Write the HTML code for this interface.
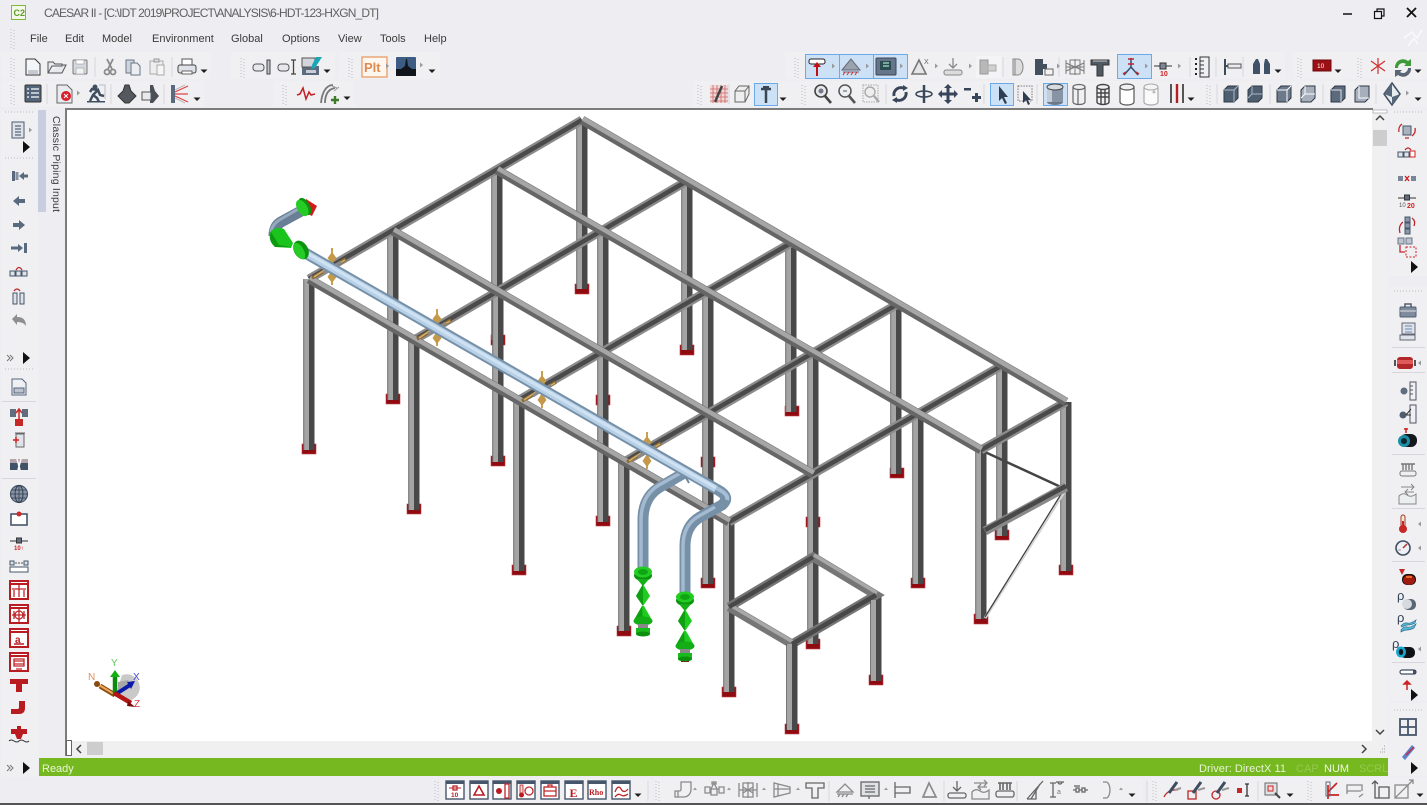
<!DOCTYPE html>
<html><head><meta charset="utf-8"><title>CAESAR II</title>
<style>
html,body{margin:0;padding:0;background:#eeeef2;overflow:hidden}
svg{display:block;position:absolute;left:0;top:0;filter:blur(.35px)}
text{font-family:"Liberation Sans",sans-serif}
.s{fill:none;stroke:#4a5a6e;stroke-width:1.5}
.g{fill:#5a6a7e}
.r{fill:#b81c20}
.gr{fill:#d6d9df;stroke:#777;stroke-width:1}
.lg{fill:#dfe3e8;stroke:#46566a;stroke-width:1}
.dk{fill:#46566a;stroke:#333b48;stroke-width:.8}
.rs{fill:none;stroke:#c0272b;stroke-width:1.3}
.rb{fill:#fff;stroke:#b81c20;stroke-width:2}
.hl{fill:#cce0f6;stroke:#6aa9ea;stroke-width:1}
.gp{stroke:#bdbdc2;stroke-width:1;stroke-dasharray:1 2;fill:none}
.sep{stroke:#d6d6dc;stroke-width:1}
.bx{fill:#fff;stroke:#46566a;stroke-width:1.4}
</style></head><body>
<svg width="1427" height="805" viewBox="0 0 1427 805" xmlns="http://www.w3.org/2000/svg">
<defs>
<path id="dn" d="M-3.5-1.5h7L0 2z" fill="#1e1e1e"/>
<path id="ua" d="M-2-1h4L0-3.5z" fill="#999"/>
<path id="sa" d="M-1 -2.500v5l3-2.500z" fill="#999"/>
<path id="la" d="M1-2.500v5l-3-2.500z" fill="#999"/>
<path id="ra" d="M-3-6v12l7-6z" fill="#111"/>
<g id="gv"><path class="gp" d="M0-9v19M3-8v19"/></g>
<g id="gh"><path class="gp" d="M-14 0h29" stroke-dasharray="1 1.400"/></g>
<g id="cols" fill="none">
<path d="M582 120V289M687 181V350M791 243V412M896 305V474M1002 366V536M1066 402V571M497 170V340M603 231V400M708 292V462M813 353V522M918 413V584M981 450V619M393 231V400M498 292V462M603 353V522M708 413V584M813 474V644M309 279V450M414 340V510M519 400V571M624 462V631M729 522V692M876 595V681M792 644V730"/>
</g>
<g id="rows" fill="none"><path d="M582 120L1066 402M497 170L981 450M393 231L813 474M309 279L729 522"/></g>
<g id="trans" fill="none"><path d="M582 120L309 279M687 181L414 340M791 243L519 400M896 305L624 462M1001 366L729 522M1066 402L981 450"/></g>
<g id="base"><rect x="-7" y="-7" width="14" height="10" fill="#8f0b10"/><rect x="-7" y="-7" width="14" height="10" fill="none" stroke="#c04048" stroke-width=".6"/></g>
<g id="sup">
<path d="M-20 11L-6 3M14-8L6-3" stroke="#8b6a35" stroke-width="3.500" fill="none"/>
<path d="M-18 10L-6 2M13-7L6-3" stroke="#d6b06a" stroke-width="1.400" fill="none"/>
<path d="M0-19v37" stroke="#c9a153" stroke-width="2"/>
<path d="M0-15L4.500-9 0-3-4.500-9zM0 3L4.500 10 0 16-4.500 10z" fill="#c49a4a"/>
<path d="M-9 6l9-6 9-5" stroke="#8a8a8a" stroke-width="3" fill="none"/>
</g>
<g id="flg"><ellipse cx="0" cy="2.500" rx="9" ry="5.500" fill="#0c930f"/><ellipse cx="0" cy="-1" rx="9" ry="5.500" fill="#22cc22"/><ellipse cx="0" cy="-1" rx="5" ry="3" fill="#0fa512"/></g>
<g id="stack">
<use href="#flg"/>
<path d="M-6 6L6 6 1 12-1 12z" fill="#14b017"/>
<path d="M0 11L7 23 0 33-7 23z" fill="#1ecb1e"/><path d="M0 11L-7 23 0 33z" fill="#0f9f12"/>
<path d="M-1 33L1 33 9 47-9 47z" fill="#1ecb1e"/><path d="M-1 33L-9 47 0 49z" fill="#0f9f12"/>
<ellipse cx="0" cy="48" rx="9.500" ry="4.500" fill="#13ad16"/>
<rect x="-5" y="51" width="10" height="4" fill="#888"/>
<path d="M-7 55h14v6h-14z" fill="#18bb1b"/><ellipse cx="0" cy="61" rx="7" ry="2.500" fill="#0b8f0e"/>
</g>
</defs>

<rect width="1427" height="805" fill="#eeeef2"/>

<!-- toolbar bands -->
<g fill="#f0f0f3">
<rect x="1" y="52" width="210" height="27"/><rect x="231" y="52" width="104" height="27"/><rect x="339" y="52" width="101" height="27"/>
<rect x="1" y="81" width="203" height="26"/><rect x="273" y="81" width="81" height="26"/>
<rect x="785" y="52" width="500" height="27"/><rect x="1293" y="52" width="134" height="27"/>
<rect x="693" y="81" width="734" height="26"/>
<rect x="1" y="111" width="37" height="44"/><rect x="1" y="156" width="37" height="208"/><rect x="1" y="365" width="37" height="412"/>
<rect x="1389" y="111" width="38" height="165"/><rect x="1389" y="287" width="38" height="414"/><rect x="1389" y="703" width="38" height="73"/>
<rect x="441" y="778" width="209" height="25"/><rect x="655" y="778" width="488" height="25"/><rect x="1148" y="778" width="279" height="25"/>
</g>

<!-- viewport -->
<rect x="67" y="110" width="1305" height="631" fill="#fff"/>
<rect x="67" y="108" width="1306" height="2" fill="#7c7c7c"/>
<rect x="65" y="108" width="2" height="648" fill="#7c7c7c"/>

<!-- tab -->
<rect x="38" y="110" width="8" height="102" fill="#c8cde0"/>
<text transform="translate(53,116) rotate(90)" font-size="10.500" fill="#3a3a3a" textLength="96" lengthAdjust="spacing">Classic Piping Input</text>

<!-- 3D scene -->
<g>
<g>
<use href="#base" x="582" y="291"/><use href="#base" x="687" y="352"/><use href="#base" x="792" y="413"/><use href="#base" x="897" y="475"/><use href="#base" x="1002" y="537"/><use href="#base" x="1066" y="572"/>
<use href="#base" x="498" y="342"/><use href="#base" x="603" y="402"/><use href="#base" x="708" y="464"/><use href="#base" x="813" y="524"/><use href="#base" x="918" y="585"/><use href="#base" x="981" y="621"/>
<use href="#base" x="393" y="401"/><use href="#base" x="498" y="463"/><use href="#base" x="603" y="523"/><use href="#base" x="708" y="585"/><use href="#base" x="813" y="646"/>
<use href="#base" x="309" y="451"/><use href="#base" x="414" y="511"/><use href="#base" x="519" y="572"/><use href="#base" x="624" y="633"/><use href="#base" x="729" y="694"/><use href="#base" x="876" y="682"/><use href="#base" x="792" y="731"/>
</g>
<!-- columns -->
<use href="#cols" stroke="#484848" stroke-width="11"/>
<use href="#cols" stroke="#a4a4a4" stroke-width="5" transform="translate(-2.500,0)"/>
<use href="#cols" stroke="#6c6c6c" stroke-width="1" transform="translate(-5.300,0)"/>
<!-- brace and diagonal -->
<path d="M985 452L1063 488" stroke="#444" stroke-width="2.500"/>
<path d="M985 618L1064 492" stroke="#d4d4d4" stroke-width="3"/>
<path d="M985 617L1063 491" stroke="#3e3e3e" stroke-width="1.200"/>
<!-- lower beams -->
<path d="M985 531L1066 487" stroke="#8a8a8a" stroke-width="9"/><path d="M985 530L1066 486" stroke="#484848" stroke-width="4.500"/>
<path d="M729 607L813 557L876 595 792 644 729 607" fill="none" stroke="#767676" stroke-width="9"/>
<path d="M813 557L876 595M729 607L792 644" stroke="#a8a8a8" stroke-width="3.500" transform="translate(1,-2)"/>
<path d="M729 607L813 557M792 644L876 595" stroke="#484848" stroke-width="4.500"/>
<path d="M792 644V730" stroke="#484848" stroke-width="11"/><path d="M789.500 644V730" stroke="#a4a4a4" stroke-width="5"/>
<path d="M876 600V681" stroke="#484848" stroke-width="11"/><path d="M873.500 600V681" stroke="#a4a4a4" stroke-width="5"/>
<!-- top beams -->
<use href="#trans" stroke="#8c8c8c" stroke-width="9"/>
<use href="#trans" stroke="#4a4a4a" stroke-width="4.500"/>
<use href="#rows" stroke="#666" stroke-width="9"/>
<use href="#rows" stroke="#a6a6a6" stroke-width="4.500" transform="translate(1,-1.500)"/>
<!-- supports -->
<use href="#sup" x="332" y="267"/><use href="#sup" x="437" y="328"/><use href="#sup" x="542" y="390"/><use href="#sup" x="647" y="451"/>
<!-- left pipe lower -->
<path d="M686 472L660 487Q643 497 643 520V572" fill="none" stroke="#7690a8" stroke-width="11"/>
<path d="M686 470L659 485Q641 496 641 520V572" fill="none" stroke="#a4bad0" stroke-width="3.500"/>
<path d="M681 469l8 14" stroke="#6f88a1" stroke-width="2"/>
<!-- main pipe -->
<path d="M300 250L718 490Q731 497 722 505L700 517Q685 526 685 546V596" fill="none" stroke="#7690a8" stroke-width="11"/>
<path d="M300 250L716 489" stroke="#b7d0e6" stroke-width="7"/>
<path d="M300 249L716 488" stroke="#cfe2f3" stroke-width="3"/>
<path d="M716 488Q729 494 727 500" fill="none" stroke="#a7bfd6" stroke-width="4"/>
<path d="M715 507L699 516Q683 525 683 546V596" fill="none" stroke="#a4bad0" stroke-width="3.500"/>
<!-- green stacks -->
<use href="#stack" x="643" y="573"/>
<rect x="681" y="659" width="8" height="3" fill="#8f0b10"/>
<use href="#stack" x="685" y="598"/>
<!-- left end -->
<path d="M303 210L281 222Q274 226 274 236" fill="none" stroke="#6a7f96" stroke-width="11"/>
<path d="M300 208L281 219Q272 224 271 232" fill="none" stroke="#96abc0" stroke-width="3"/>
<path d="M306 199L317 206 312 216 302 211z" fill="#d21c1c"/>
<g transform="translate(304,207) rotate(-30)"><ellipse cx="1" cy="0" rx="5" ry="9.500" fill="#0c930f"/><ellipse cx="-2" cy="0" rx="5" ry="9" fill="#26cc26"/></g>
<path d="M271 231Q277 226 284 229L293 243 291 248 275 247Q267 240 271 231z" fill="#1ac41c"/>
<path d="M271 232L279 245 290 247 275 247Q268 240 271 232z" fill="#0e9911"/>
<g transform="translate(301,250) rotate(60)"><ellipse cx="0" cy="0" rx="10" ry="7" fill="#0c930f"/><ellipse cx="0" cy="2" rx="9" ry="4.500" fill="#26cc26"/></g>
<!-- triad -->
<path d="M122 675A13 13 0 0 1 131 700L116 694z" fill="#c9c9c9"/><path d="M118 682L128 680 130 688 118 692z" fill="#a7a7a7"/>
<path d="M115 695L100 686" stroke="#8a4b10" stroke-width="5"/><path d="M114 694L99 685" stroke="#f0a85a" stroke-width="2"/><circle cx="97" cy="684" r="3" fill="#8a4b10"/>
<path d="M115 695V676" stroke="#0c8c0c" stroke-width="4.500"/><path d="M110 677L115 670 120 677z" fill="#12b012"/>
<path d="M116 694L130 685" stroke="#0a1aa8" stroke-width="4"/><path d="M127 682L135 681 131 689z" fill="#0a1aa8"/>
<path d="M114 693L131 703" stroke="#b31414" stroke-width="4.500"/><path d="M128 701L135 707 127 706z" fill="#7a0a0a"/>
<text x="111" y="666" font-size="10" fill="#5ec85e">Y</text>
<text x="133" y="680" font-size="10" fill="#4646d0">X</text>
<text x="134" y="707" font-size="10" fill="#d04040">Z</text>
<text x="88" y="680" font-size="10" fill="#e0905a">N</text>
</g>

<!-- scrollbars -->
<rect x="1372" y="110" width="16" height="647" fill="#f0f0f0"/>
<rect x="67" y="741" width="1321" height="16" fill="#f0f0f0"/>
<rect x="1373" y="130" width="14" height="16" fill="#cdcdcd"/>
<rect x="87" y="742" width="16" height="13" fill="#cdcdcd"/>
<path d="M1376 120l4-4 4 4M1376 730l4 4 4-4M81 745l-4 4 4 4M1362 745l4 4-4 4" fill="none" stroke="#444" stroke-width="1.500"/>
<rect x="66.500" y="740.500" width="5" height="15" fill="#fff" stroke="#666"/>
<path d="M1384 746h1M1382 749h3M1380 752h5" stroke="#bbb" stroke-width="1.400" stroke-dasharray="1 1"/>
<rect x="1373" y="110" width="14" height="3" fill="#fff" stroke="#999" stroke-width=".6"/>

<!-- status -->
<rect x="39" y="758" width="1349" height="18" fill="#76b81f"/>
<text x="42" y="772" font-size="11" fill="#eaf5d8">Ready</text>
<text x="1199" y="772" font-size="11" fill="#e8f3d4" textLength="87">Driver: DirectX 11</text>
<text x="1296" y="772" font-size="11" fill="#94c94f">CAP</text>
<text x="1324" y="772" font-size="11" fill="#eef7df">NUM</text>
<text x="1359" y="772" font-size="11" fill="#94c94f">SCRL</text>
<rect x="0" y="803" width="1427" height="2" fill="#555"/>

<!-- title bar -->
<rect x="11.500" y="5.500" width="14" height="14" fill="#f3f8ea" stroke="#7fb83a"/>
<text x="13.500" y="16" font-size="9" font-weight="bold" fill="#5f9a22">C2</text>
<text x="44" y="17" font-size="12" fill="#606060" textLength="335" lengthAdjust="spacing">CAESAR II - [C:\IDT 2019\PROJECT\ANALYSIS\6-HDT-123-HXGN_DT]</text>
<path d="M1343 14h9" stroke="#111" stroke-width="1.500"/>
<path d="M1374.500 11.500h7v7h-7zM1377 11.500v-2.500h7v7h-2.500" fill="none" stroke="#111" stroke-width="1.200"/>
<path d="M1407 8l9 9M1416 8l-9 9" stroke="#111" stroke-width="1.800"/>
<path d="M1404 38l8-6 5 6 5-8M1408 46l6-8 4 6" fill="none" stroke="#fafafa" stroke-width="1.500"/>

<!-- menu -->
<use href="#gv" x="11" y="38"/>
<g font-size="11" fill="#3a3a3a">
<text x="30" y="42">File</text><text x="65" y="42">Edit</text><text x="102" y="42">Model</text><text x="152" y="42">Environment</text><text x="231" y="42">Global</text><text x="282" y="42">Options</text><text x="338" y="42">View</text><text x="380" y="42">Tools</text><text x="424" y="42">Help</text>
</g>

<!-- TOOLBAR row 1 left -->
<use href="#gv" x="11" y="67"/><use href="#gv" x="241" y="67"/><use href="#gv" x="349" y="67"/>
<use href="#gv" x="11" y="94"/><use href="#gv" x="283" y="94"/>
<g transform="translate(33,67)"><path d="M-7-8h9l5 5v11h-14z" fill="#f4f5f8" stroke="#333"/><path d="M-5 3h10v4h-10z" fill="#c5c9d2"/></g>
<g transform="translate(56,67)"><path d="M-8 6v-11h5l2 2h7v2h-10l-4 7h14l4-8h-4" fill="#e6e9ee" stroke="#555"/></g>
<g transform="translate(80,67)"><rect x="-7" y="-7" width="14" height="14" rx="1" class="gr"/><rect x="-4" y="-7" width="8" height="4" fill="#fff" stroke="#999" stroke-width=".6"/><rect x="-4" y="1" width="8" height="6" fill="#f2f2f2" stroke="#999" stroke-width=".6"/></g>
<g transform="translate(110,67)" fill="none" stroke="#8a8a8a" stroke-width="1.800"><path d="M-3-8L2 2M3-8L-2 2"/><circle cx="-3" cy="5" r="2.500"/><circle cx="3" cy="5" r="2.500"/></g>
<g transform="translate(134,67)"><path d="M-8-7h8v13h-8z" fill="#cfd4dc" stroke="#6a7688"/><path d="M-3-4h6l3 3v9h-9z" fill="#eceef2" stroke="#6a7688"/></g>
<g transform="translate(158,67)"><path d="M-8-6h13v13h-13z" fill="#eee" stroke="#aaa"/><path d="M-4-8h5v3h-5z" fill="#ddd" stroke="#999"/><path d="M-1-2h7v10h-7z" fill="#f6f6f6" stroke="#aaa"/></g>
<g transform="translate(187,67)"><rect x="-5" y="-8" width="10" height="6" fill="#fff" stroke="#555"/><rect x="-9" y="-2" width="18" height="8" rx="2" fill="#dfe3e9" stroke="#444"/><rect x="-5" y="4" width="10" height="3" fill="#fff" stroke="#666"/></g>
<use href="#dn" x="204" y="71"/>
<path class="sep" d="M95 57v20M172 57v20"/>
<g transform="translate(262,67)"><rect x="-9" y="-3" width="11" height="7" rx="3" fill="#e6e8ec" stroke="#555"/><rect x="5" y="-7" width="3" height="14" fill="#bfc4cc" stroke="#444"/></g>
<g transform="translate(287,67)"><rect x="-9" y="-3" width="11" height="7" rx="3" fill="#e6e8ec" stroke="#555"/><path d="M4-7h5M4 7h5M6.500-7v14" stroke="#444" stroke-width="1.300" fill="none"/></g>
<g transform="translate(316,67)"><path d="M-14-1h17v9h-17z" fill="#5d6b7e"/><path d="M-14-9h13v9h-13z" fill="#d2d6dc" stroke="#555"/><path d="M0-10l6 0-7 11-4 1 1-4z" fill="#1aa6b5"/><path d="M-10 3h10v3h-10z" fill="#c9cdd4"/></g>
<use href="#dn" x="327" y="71"/>
<g transform="translate(375,67)"><rect x="-13" y="-10" width="25" height="20" fill="#fdf7f0" stroke="#e8955c" stroke-width="1.200"/><text x="-11" y="5" font-size="13" font-weight="bold" fill="#df8a50">Plt</text></g>
<use href="#sa" x="387" y="66"/>
<g transform="translate(406,67)"><rect x="-10" y="-10" width="20" height="19" rx="1" fill="#3c5c84"/><path d="M-10 9V2h5l4-3 1-7h1l1 7 4 3h4v7z" fill="#10151c"/></g>
<use href="#sa" x="421" y="65"/><use href="#dn" x="432" y="71"/>

<!-- row 2 left -->
<g transform="translate(33,94)"><rect x="-8" y="-9" width="16" height="17" rx="1" fill="#54647a" stroke="#333"/><path d="M-6-5h2M-2-5h8M-6-1h2M-2-1h8M-6 3h2M-2 3h8" stroke="#dfe3ea" stroke-width="1.600"/></g>
<path class="sep" d="M47 84v20M111 84v20M164 84v20"/>
<g transform="translate(65,94)"><path d="M-8-9h10l5 5v13h-15z" fill="#e8eaee" stroke="#666"/><circle cx="1" cy="2" r="5" fill="#d61d2a"/><path d="M-1 0l4 4M3 0l-4 4" stroke="#fff"/></g>
<use href="#sa" x="78" y="93"/>
<g transform="translate(96,94)"><rect x="-9" y="7" width="18" height="1.500" fill="#3f4f60"/><circle cx="-1" cy="-7" r="2.500" fill="#3f4f60"/><path d="M-6 7l3-6 5-5 2 5 4 1M-3 1l4 3 2 4M2-4l-6-1-2 3" stroke="#3f4f60" stroke-width="2.500" fill="none"/><path d="M3-9h6v14" fill="none" stroke="#b8bcc4"/></g>
<g transform="translate(127,94)"><path d="M-2-9h4l2 6 5 5-7 7h-4l-7-7 5-5z" fill="#55595f" stroke="#333"/></g>
<g transform="translate(150,94)"><path d="M0-9h3l2 6 4 5-6 7h-3z" fill="#4b4f57"/><rect x="-8" y="-2" width="9" height="8" fill="#e8eaee" stroke="#555"/></g>
<g transform="translate(180,94)"><rect x="-9" y="-9" width="4" height="18" fill="#5a6a7e"/><path d="M-5-2L8-8M-5 0h13M-5 2L8 8" stroke="#d44" stroke-width="1.200" fill="none"/><path d="M-5-4L5-9M-5 4L5 9" stroke="#bbb" fill="none"/></g>
<use href="#dn" x="197" y="99"/>
<path d="M297 96l3-1 3-6 3 11 3-7 2 3 4-1" fill="none" stroke="#c62024" stroke-width="1.500" transform="translate(0,-1)"/>
<g transform="translate(330,94)"><path d="M-9 9C-8-3-3-9 3-9M-5 9C-5-1-1-5 5-6" fill="none" stroke="#777" stroke-width="1.800"/><path d="M1 6h8M5 2v8" stroke="#3d7a2a" stroke-width="2.400"/><path d="M2-8l5 2M4-3l5-4" stroke="#999"/></g>
<use href="#dn" x="347" y="98"/>

<!-- row 1 right -->
<use href="#gv" x="795" y="67"/><use href="#gv" x="1298" y="67"/><use href="#gv" x="1358" y="67"/>
<rect x="805.500" y="54.500" width="34" height="24" class="hl"/><rect x="839.500" y="54.500" width="34" height="24" class="hl"/><rect x="873.500" y="54.500" width="34" height="24" class="hl"/><rect x="1117.500" y="54.500" width="34" height="24" class="hl"/>
<g transform="translate(817,67)"><rect x="-8" y="-8" width="16" height="5" rx="2" fill="#fff" stroke="#222"/><path d="M0 9V-1" stroke="#c01014" stroke-width="2"/><path d="M-4 0L0-5 4 0z" fill="#c01014"/></g>
<use href="#sa" x="833" y="66"/>
<g transform="translate(851,66)"><path d="M-9 4L0-7 9 4z" fill="#9aa3ae" stroke="#667"/><path d="M-8 6h16" stroke="#667"/><path d="M-8 9l2-3M-4 9l2-3M0 9l2-3M4 9l2-3" stroke="#c33"/></g>
<use href="#sa" x="867" y="66"/>
<g transform="translate(886,67)"><rect x="-10" y="-9" width="20" height="17" rx="1" fill="#66758a" stroke="#3d4856"/><rect x="-6" y="-6" width="11" height="9" fill="#2a4b50"/><path d="M-3-4h6M-3-1h6" stroke="#cfe"/></g>
<use href="#sa" x="901" y="66"/>
<g transform="translate(920,67)"><path d="M-8 7L-1-7 6 7z" fill="#e6e6e6" stroke="#777" stroke-width="1.600"/><text x="4" y="-3" font-size="7" fill="#666">X</text></g>
<use href="#sa" x="936" y="66"/>
<g transform="translate(953,67)"><path d="M0-9v10M-4-3l4 4 4-4" fill="none" stroke="#888" stroke-width="1.300"/><rect x="-9" y="3" width="18" height="5" rx="2" fill="#dcdcdc" stroke="#888"/></g>
<use href="#sa" x="970" y="66"/>
<rect x="976" y="56" width="25" height="22" fill="#f4f4f6"/>
<g transform="translate(988,67)"><rect x="-8" y="-7" width="8" height="14" fill="#b8b8b8" stroke="#999"/><rect x="0" y="-2" width="8" height="6" fill="#d0d0d0" stroke="#aaa"/></g>
<path class="sep" d="M1003 57v20M1059 57v20M1190 57v20M1216 57v20M1243 57v20"/>
<g transform="translate(1017,67)"><path d="M-4-8h5a5 8 0 0 1 0 16h-5z" fill="#ddd" stroke="#888"/><path d="M-2-8v16" stroke="#888"/></g>
<g transform="translate(1044,67)"><rect x="-9" y="-8" width="8" height="16" fill="#45505e"/><rect x="-1" y="-3" width="4" height="5" fill="#45505e"/><rect x="1" y="2" width="8" height="6" fill="#f3f3f3" stroke="#666"/></g>
<use href="#sa" x="1058" y="66"/>
<g transform="translate(1075,67)" fill="none" stroke="#7a7a7a"><path d="M-9-7v14M9-7v14M-9 0h18M-5-7h10v14h-10zM0-8v16M-9-4l18 8M-9 4l18-8"/></g>
<g transform="translate(1100,67)"><path d="M-9-7h18v5h-6v11h-6v-11h-6z" fill="#4f5963" stroke="#333"/><path d="M-7-6h14" stroke="#c9ced5"/></g>
<g transform="translate(1131,67)"><path d="M0-9v9M-7 8L0 0l7 8" stroke="#37506e" stroke-width="1.500" fill="none"/><path d="M-3-8h6M-3-3h6M-8 7l3-2M5 5l3 2" stroke="#c0272b" stroke-width="1.500"/></g>
<use href="#sa" x="1146" y="66"/>
<g transform="translate(1163,67)"><path d="M-9-1h18" stroke="#333"/><rect x="-3" y="-4" width="6" height="6" fill="#7c8898" stroke="#333"/><text x="-3" y="9" font-size="7" font-weight="bold" fill="#c22">10</text></g>
<use href="#sa" x="1179" y="66"/>
<g transform="translate(1203,67)"><rect x="-3" y="-10" width="9" height="20" fill="#eef0f3" stroke="#333"/><path d="M-7-9v18" stroke="#222" stroke-width="2" stroke-dasharray="2 3"/><path d="M-3-6h4M-3-2h4M-3 2h4M-3 6h4" stroke="#333"/></g>
<g transform="translate(1233,67)"><path d="M-8-8v16M-8-1h16" stroke="#3d4a5a" stroke-width="2" fill="none"/><rect x="-5" y="-3" width="13" height="4" fill="#e9ebef" stroke="#555"/></g>
<g transform="translate(1262,67)"><path d="M-9 7V-3l3-5h2l2 5v10zM2 7V-3l1-5h2l3 5v10z" fill="#3f5268"/></g>
<use href="#dn" x="1278" y="71"/>
<g transform="translate(1322,66)"><rect x="-9" y="-6" width="18" height="11" fill="#9c0f14" stroke="#6d0a0e"/><text x="-5" y="2" font-size="6.500" fill="#fff">10</text></g>
<use href="#dn" x="1338" y="71"/>
<g transform="translate(1378,66)" stroke="#d32c2c" stroke-width="1.200"><path d="M0-8V8M-7-5L7 5M-7 5L7-5"/></g>
<g transform="translate(1403,67)"><path d="M-8 1a8 8 0 0 1 13-7l3-2v7h-7l2-2a5 5 0 0 0-8 4z" fill="#3f9a3a"/><path d="M8 1a8 8 0 0 1-13 7l-3 2V3h7l-2 2a5 5 0 0 0 8-4z" fill="#5a6674"/></g>
<use href="#dn" x="1418" y="71"/>

<!-- row 2 right -->
<use href="#gv" x="698" y="94"/><use href="#gv" x="802" y="94"/><use href="#gv" x="1207" y="94"/>
<path class="sep" d="M886 84v20M984 84v20M1037 84v20M1217 84v20M1270 84v20M1323 84v20M1376 84v20M729 84v20"/>
<rect x="754.500" y="83.500" width="23" height="22" class="hl"/><rect x="990.500" y="83.500" width="23" height="22" class="hl"/><rect x="1043.500" y="83.500" width="24" height="22" class="hl"/>
<g transform="translate(719,94)"><rect x="-9" y="-9" width="18" height="18" fill="#f1d8d8"/><path d="M-9-5h18M-9-1h18M-9 3h18M-9 7h18M-6-9v18M-2-9v18M2-9v18M6-9v18" stroke="#cf6666" stroke-width=".8"/><path d="M-4 8L3-8" stroke="#444" stroke-width="2.500"/></g>
<g transform="translate(742,94)"><path d="M-7 8V-3l4-5H7v8L3 8z M-7-3H3V8M3-3l4-5" fill="#eee" stroke="#666"/></g>
<g transform="translate(766,94)"><path d="M-5-5h10M0-7V9" stroke="#3a4654" stroke-width="2.500"/><path d="M-3-8h6v3h-6z" fill="#3a4654"/></g>
<use href="#dn" x="783" y="99"/>
<g transform="translate(823,94)"><circle cx="-2" cy="-3" r="6" fill="#e6e8ec" stroke="#444" stroke-width="1.600"/><path d="M2 2L8 9" stroke="#444" stroke-width="2.600"/><circle cx="-2" cy="-3" r="2.500" fill="#778"/></g>
<g transform="translate(847,94)"><circle cx="-2" cy="-3" r="6" fill="#edf0f3" stroke="#555" stroke-width="1.500"/><path d="M2 2L8 9" stroke="#555" stroke-width="2.600"/><path d="M-4-3h4" stroke="#555"/></g>
<g transform="translate(871,94)"><rect x="-8" y="-9" width="15" height="17" fill="none" stroke="#aaa" stroke-dasharray="1.500 1"/><circle cx="-1" cy="-2" r="5" fill="#eee" stroke="#aaa" stroke-width="1.400"/><path d="M3 2l5 6" stroke="#aaa" stroke-width="2.400"/></g>
<g transform="translate(900,94)"><path d="M-6 2A7 7 0 0 1 5-5M6-2A7 7 0 0 1-5 5" fill="none" stroke="#39465a" stroke-width="3"/><path d="M3-9l5 3-5 3zM-3 9l-5-3 5-3z" fill="#39465a"/></g>
<g transform="translate(924,94)"><path d="M0-9V9" stroke="#39465a" stroke-width="2.500"/><ellipse cx="0" cy="0" rx="8" ry="3" fill="none" stroke="#39465a" stroke-width="1.500"/></g>
<g transform="translate(948,94)" fill="#39465a"><path d="M-1.500-6h3v12h-3zM-6-1.500h12v3h-12z"/><path d="M0-10l4 4h-8zM0 10l4-4h-8zM-10 0l4-4v8zM10 0l-4-4v8z"/></g>
<g transform="translate(972,94)" fill="#39465a"><rect x="-8" y="-6" width="7" height="2.500"/><rect x="0" y="2" width="9" height="3"/><rect x="3" y="-1" width="3" height="9"/></g>
<g transform="translate(1002,94)"><path d="M-3-8V7l3-3 3 6 2-1-3-6h4z" fill="#2f3d4f"/></g>
<g transform="translate(1025,94)"><rect x="-7" y="-8" width="14" height="15" fill="none" stroke="#777" stroke-dasharray="1.500 1.200"/><path d="M-2-3V9l3-3 2 5 2-1-2-4h3z" fill="#2f3d4f"/></g>
<g transform="translate(1055,94)"><rect x="-8" y="-7" width="16" height="15" fill="#8694a5"/><rect x="-8" y="-7" width="5" height="15" fill="#c5ccd5"/><ellipse cx="0" cy="-7" rx="8" ry="3" fill="#d7dce2" stroke="#444"/><path d="M-8 8a8 3 0 0 0 16 0" fill="#6a7888"/></g>
<g transform="translate(1079,94)" fill="none" stroke="#666" stroke-width="1.200"><ellipse cx="0" cy="-7" rx="6" ry="2.500"/><path d="M-6-7V8M6-7V8M-1-5V10M-6 8a6 2.500 0 0 0 12 0"/></g>
<g transform="translate(1103,94)" fill="none" stroke="#444" stroke-width="1.400"><ellipse cx="0" cy="-7" rx="6" ry="2.500"/><path d="M-6-7V8M6-7V8M-2-5V10M2-5V10M-6 8a6 2.500 0 0 0 12 0M-6-1h12M-6 3h12"/></g>
<g transform="translate(1127,94)"><path d="M-7-7V8a7 3 0 0 0 14 0V-7" fill="#fff" stroke="#555" stroke-width="1.200"/><ellipse cx="0" cy="-7" rx="7" ry="3" fill="#eef0f2" stroke="#555" stroke-width="1.200"/></g>
<g transform="translate(1151,94)"><path d="M-7-7V8a7 3 0 0 0 14 0V-7" fill="#fafafa" stroke="#aaa" stroke-width="1.200"/><ellipse cx="0" cy="-7" rx="7" ry="3" fill="#f4f4f4" stroke="#aaa"/><circle cx="3" cy="-2" r="1.500" fill="#bbb"/></g>
<g transform="translate(1177,94)"><path d="M-6-10V9M6-10V9" stroke="#555" stroke-width="2"/><path d="M0-10V9" stroke="#b51f22" stroke-width="2.400"/></g>
<use href="#dn" x="1191" y="99"/>
<g transform="translate(1231,94)"><path d="M-7-4l4-4h10v12l-4 4H-7z" fill="#4f5f72" stroke="#2e3946"/><path d="M-7-4H3v12M3-4l4-4" fill="none" stroke="#aeb7c2"/></g>
<g transform="translate(1255,94)"><path d="M-7-4l4-4h10v12l-4 4H-7z" fill="#4f5f72" stroke="#2e3946"/><path d="M-3-8v8H7M-3 0l-4 4" fill="none" stroke="#aeb7c2"/></g>
<g transform="translate(1284,94)"><path d="M-7-4l4-4h10v12l-4 4H-7z" fill="#6c7a8b" stroke="#2e3946"/><path d="M-7-4h10v12M3-4l4-4" fill="none" stroke="#fff"/></g>
<g transform="translate(1308,94)"><path d="M-7-4l4-4h10v12l-4 4H-7z" fill="#a6afbb" stroke="#2e3946"/><path d="M-3-8v8H7M-3 0l-4 4" fill="none" stroke="#fff"/></g>
<g transform="translate(1338,94)"><path d="M-7-4l4-4h10v12l-4 4H-7z" fill="#5b6a7c" stroke="#2e3946"/><path d="M-7-4h10v12" fill="none" stroke="#dfe3e8"/></g>
<g transform="translate(1362,94)"><path d="M-7-4l4-4h10v12l-4 4H-7z" fill="#a6afbb" stroke="#2e3946"/><path d="M-3-8v12h10" fill="none" stroke="#fff"/></g>
<g transform="translate(1392,94)"><path d="M0-11L8 0 0 11-8 0z" fill="#e9ecef" stroke="#3e4d60" stroke-width="1.500"/><path d="M0-11L-8 0l8 3zM0 11L8 0l-8 3z" fill="#56677c"/></g>
<use href="#sa" x="1407" y="93"/><use href="#dn" x="1418" y="99"/>

<!-- LEFT TOOLBAR -->
<use href="#gh" x="19" y="112"/><use href="#gh" x="19" y="158"/><use href="#gh" x="19" y="369"/>
<g transform="translate(18,130)"><rect x="-6" y="-8" width="12" height="16" fill="#dfe3e9" stroke="#4a5a6e"/><path d="M-3-4h6M-3-1h6M-3 2h6M-3 5h6" stroke="#36465a"/></g><use href="#sa" x="30" y="130"/>
<use href="#ra" x="26" y="147"/><use href="#ra" x="26" y="358"/><use href="#ra" x="26" y="768"/><use href="#ra" x="1414" y="267"/><use href="#ra" x="1414" y="695"/><use href="#ra" x="1414" y="768"/>
<path d="M7 355l3 3-3 3M10 355l3 3-3 3M7 765l3 3-3 3M10 765l3 3-3 3" fill="none" stroke="#777"/>
<g class="g">
<g transform="translate(19,176)"><rect x="-7" y="-5" width="3" height="10"/><rect x="-3.500" y="-4" width="3" height="8" fill="#8390a1"/><path d="M0 0l5-4v2.500h4v3h-4V4z"/></g>
<path transform="translate(19,201)" d="M-6 0l6-5v3h6v4H0v3z"/>
<path transform="translate(19,225)" d="M6 0L0-5v3h-6v4h6v3z"/>
<g transform="translate(19,248)"><rect x="5" y="-5" width="3" height="10"/><path d="M4 0L-1-4v2.500h-7v3h7V4z"/></g>
</g>
<g transform="translate(19,271)"><rect x="-9" y="0" width="5" height="5" class="lg"/><rect x="-3" y="0" width="5" height="5" class="lg"/><rect x="3" y="0" width="5" height="5" class="lg"/><path d="M-3-1q3-5 6 0" class="rs"/></g>
<g transform="translate(19,296)"><rect x="-6" y="-3" width="4" height="11" class="lg"/><rect x="1" y="-3" width="4" height="11" class="lg"/><path d="M-5-5q3-4 6 0" class="rs"/></g>
<path transform="translate(19,320)" d="M-7-1l5-5v3c5 0 9 2 9 9-2-3-5-4-9-4v3z" fill="#8e8e8e"/>
<g transform="translate(19,387)"><path d="M-7-8h10l4 4v12h-14z" fill="#eef0f3" stroke="#54647a"/><rect x="-5" y="1" width="10" height="5" fill="#bcc3cc" stroke="#54647a"/></g>
<path class="sep" d="M2 401.500h34M2 478.500h34M1392 347.500h33M1392 372.500h33M1392 454.500h33M1392 508.500h33M1392 561.500h33M1392 662.500h33"/>
<g transform="translate(19,416)"><rect x="-9" y="-7" width="6" height="8" fill="#5f6d7e"/><rect x="3" y="-7" width="6" height="8" fill="#5f6d7e"/><rect x="-4" y="3" width="8" height="7" fill="#c62828"/><path d="M0-6V3M-3-3l3-4 3 4" stroke="#c62828" fill="none" stroke-width="1.500"/></g>
<g transform="translate(19,440)"><path d="M-3-6h8v13h-8z" fill="#dfe2e7" stroke="#666"/><path d="M-4-7h10" stroke="#666"/><path d="M-6 0h6M-3-3v6" stroke="#c22" stroke-width="1.500"/></g>
<g transform="translate(19,465)"><rect x="-9" y="-2" width="18" height="7" fill="#3f5268"/><rect x="-9" y="-6" width="18" height="4" fill="#b6a4ac"/><path d="M-2-6L1 5M2-6L-1 5" stroke="#fff" stroke-width="1.500"/></g>
<g transform="translate(19,494)"><circle r="8.500" fill="#8a96a8" stroke="#46566a" stroke-width="1.200"/><ellipse rx="4" ry="8.500" fill="none" stroke="#2f3d4f"/><path d="M-8.500 0h17M-7-4h14M-7 4h14M0-8.500v17" stroke="#2f3d4f" stroke-width=".8"/></g>
<g transform="translate(19,519)"><rect x="-8" y="-5" width="16" height="11" fill="#fff" stroke="#46566a" stroke-width="1.600"/><circle cy="-5" r="2.500" fill="#cf2a2a"/></g>
<g transform="translate(19,543)"><path d="M-9-2H9" stroke="#333"/><rect x="-2.500" y="-5" width="5" height="5" fill="#5f6d7e" stroke="#333"/><text x="-5" y="7" font-size="6" font-weight="bold" fill="#c22">10↑</text></g>
<g transform="translate(19,566)"><rect x="-9" y="-5" width="4" height="4" class="lg"/><rect x="5" y="-5" width="4" height="4" class="lg"/><path d="M-4-3h8" stroke="#555" stroke-dasharray="2 1"/><rect x="-9" y="1" width="18" height="5" fill="#fff" stroke="#46566a"/></g>
<g class="rb">
<g transform="translate(19,590)"><rect x="-9" y="-9" width="18" height="18"/><path d="M-9-6h18" stroke-width="2"/><path d="M-5 7V0M5 7V0M-7-1h14M0-5v12" class="rs"/></g>
<g transform="translate(19,614)"><rect x="-9" y="-9" width="18" height="18"/><path d="M-9-6h18" stroke-width="2"/><path d="M-7 1h14M0-5V8M-5-3v8M5-3v8" class="rs"/><circle cy="1" r="4" class="rs"/></g>
<g transform="translate(19,638)"><rect x="-9" y="-9" width="18" height="18"/><path d="M-9-6h18" stroke-width="2"/><path d="M-5 6h10" stroke-width="1.500"/></g>
<g transform="translate(19,662)"><rect x="-9" y="-9" width="18" height="18"/><path d="M-9-6h18" stroke-width="2"/><path d="M-5-3h10v7h-10zM-5-1h10M-5 2h10M-3 7h6" class="rs"/></g>
</g>
<text x="15" y="643" font-size="10" font-weight="bold" fill="#b81c20">a</text>
<path class="r" transform="translate(19,685)" d="M-9-6H9v5H3v8h-6v-8h-6z"/>
<path class="r" transform="translate(18,708)" d="M1-7h6v7c0 4-2 6-6 6H-7V1h6c2 0 2-1 2-2z"/>
<g transform="translate(19,733)"><path class="r" d="M-8-4h16v5H4l-2 5h-4l-2-5H-8zM-2-7h4v3h-4z"/><path d="M-10 8q2-2 5 0t5 0 5 0 5 0" fill="none" stroke="#333"/></g>

<!-- RIGHT TOOLBAR -->
<use href="#gh" x="1408" y="112"/><use href="#gh" x="1408" y="291"/><use href="#gh" x="1408" y="710"/>
<g transform="translate(1407,130)"><rect x="-4" y="-4" width="8" height="9" fill="#aab3bf" stroke="#46566a"/><path d="M-8 2a8 8 0 0 1 3-8M8-2a8 8 0 0 1-3 8M-2 8h4" class="rs"/></g>
<g transform="translate(1407,153)"><rect x="-9" y="-1" width="5" height="5" fill="#dfe3e8" stroke="#46566a"/><rect x="-3" y="-1" width="5" height="5" fill="#dfe3e8" stroke="#46566a"/><rect x="3" y="-2" width="5" height="6" fill="#fff" stroke="#c22"/><path d="M-2-3q3-4 6 0" class="rs"/></g>
<g transform="translate(1407,178)"><rect x="-9" y="-2" width="5" height="5" fill="#78869a"/><rect x="4" y="-2" width="5" height="5" fill="#78869a"/><path d="M-2-2L2 3M2-2L-2 3" stroke="#c22" stroke-width="1.400"/></g>
<g transform="translate(1407,201)"><path d="M-9-3H9" stroke="#333"/><rect x="-2.500" y="-6" width="5" height="5" fill="#5f6d7e" stroke="#333"/><text x="-8" y="6" font-size="6" fill="#555">10</text><text x="0" y="7" font-size="7" font-weight="bold" fill="#c22">20</text></g>
<g transform="translate(1407,226)"><rect x="-2" y="-9" width="5" height="5" fill="#8c98a8" stroke="#46566a"/><rect x="-2" y="-3" width="5" height="5" fill="#8c98a8" stroke="#46566a"/><rect x="-2" y="3" width="5" height="5" fill="#8c98a8" stroke="#46566a"/><path d="M-4-4q-5 4-3 11M5-8q4 3 2 8" class="rs" stroke-width="1.700"/></g>
<g transform="translate(1407,248)"><rect x="-9" y="-10" width="6" height="6" fill="#bfc5cd" stroke="#6a7688"/><rect x="-1" y="-10" width="6" height="6" fill="#bfc5cd" stroke="#6a7688"/><rect x="-1" y="-1" width="10" height="10" fill="none" stroke="#c22" stroke-dasharray="2 1.500"/><path d="M-7-3v7h5" class="rs"/></g>
<g transform="translate(1408,310)"><rect x="-8" y="-3" width="16" height="10" rx="1" fill="#7f8c9d" stroke="#4f5d70"/><path d="M-3-3v-3h6v3" fill="none" stroke="#4f5d70" stroke-width="1.500"/><path d="M-8 1h16" stroke="#dfe3e8"/></g>
<g transform="translate(1408,332)"><rect x="-6" y="-9" width="13" height="11" fill="#dfe3e9" stroke="#667"/><path d="M-3-6h7M-3-3h7M-3 0h7" stroke="#6a88b5"/><rect x="-8" y="3" width="15" height="5" fill="#dfe3e9" stroke="#667"/></g>
<g transform="translate(1405,363)"><rect x="-8" y="-6" width="16" height="12" rx="3" fill="#b3262a"/><rect x="-8" y="-3" width="16" height="4" fill="#e05a5c"/><path d="M-10-3v6M10-3v6" stroke="#555" stroke-width="2"/></g><use href="#la" x="1420" y="363"/>
<g transform="translate(1408,391)"><rect x="2" y="-9" width="6" height="18" fill="#eef0f3" stroke="#556"/><circle cx="-4" cy="0" r="3.500" fill="#5f6d7e"/><path d="M2-5h3M2-1h3M2 3h3" stroke="#556"/></g>
<g transform="translate(1408,414)"><rect x="2" y="-9" width="6" height="18" fill="#eef0f3" stroke="#556"/><circle cx="-5" cy="1" r="3.500" fill="#4f5d70"/><path d="M-2 1l5-6M-2 1h5" stroke="#333"/></g>
<g transform="translate(1408,440)"><rect x="-8" y="-6" width="17" height="13" rx="6" fill="#14181d"/><circle cx="-4" cy="1" r="6" fill="#1c8ea6"/><circle cx="-4" cy="1" r="3" fill="#0c2730"/><path d="M-2-7V-12M-4-11h4" stroke="#c22" stroke-width="1.500"/></g>
<g transform="translate(1408,470)" fill="none" stroke="#777"><path d="M-7-6h14M-5-6v6M-2-6v6M1-6v6M4-6v6" stroke-width="1.400"/><rect x="-8" y="1" width="16" height="5" rx="2"/></g>
<g transform="translate(1408,495)" fill="none" stroke="#888"><path d="M-9 9V1q4-4 8-1t9-1V9z" fill="#eceef0"/><path d="M-7-8H6M3-11l3 3-3 3M6-3H-3M0-6l-3 3 3 3"/></g>
<g transform="translate(1403,524)"><rect x="-2" y="-9" width="4" height="12" rx="2" fill="#eec" stroke="#a33"/><circle cy="5" r="4" fill="#c62828"/><rect x="-1" y="-3" width="2" height="7" fill="#c62828"/></g><use href="#la" x="1420" y="524"/>
<g transform="translate(1403,548)"><circle r="7" fill="#eef0f3" stroke="#3e4d60" stroke-width="1.600"/><path d="M0 0l4-4" stroke="#a33" stroke-width="1.500"/><path d="M-5 2h3" stroke="#999"/></g><use href="#la" x="1420" y="548"/>
<g transform="translate(1408,578)"><rect x="-6" y="-4" width="14" height="11" rx="5" fill="#111"/><ellipse cx="1" cy="2" rx="6" ry="5" fill="#a11a0e"/><path d="M-2-1h6" stroke="#e66a22" stroke-width="2"/><path d="M-9-9h6l-3 6z" fill="#c9232a"/></g>
<g transform="translate(1408,602)"><rect x="-5" y="-3" width="13" height="11" rx="5" fill="#5a6674"/><ellipse cx="-1" cy="2" rx="5" ry="5" fill="#d5dae0"/><text x="-11" y="-2" font-size="13" fill="#36465a">ρ</text></g>
<g transform="translate(1408,625)"><path d="M-7 5q3-4 6-3t9-3l-2 4q-4 2-7 2t-6 2zM-7 1q3-4 6-3t9-3l-1 3q-4 2-7 2t-6 2z" fill="#57b8d6" stroke="#2b6f8d" stroke-width=".7"/><text x="-11" y="-3" font-size="13" fill="#36465a">ρ</text></g>
<g transform="translate(1403,650)"><rect x="-3" y="-3" width="15" height="11" rx="5" fill="#0e1116"/><ellipse cx="-2" cy="2" rx="5" ry="5.500" fill="#19a6cc"/><ellipse cx="-2" cy="2" rx="2.200" ry="3" fill="#0e1116"/><text x="-11" y="-2" font-size="13" fill="#36465a">ρ</text></g><use href="#la" x="1420" y="649"/>
<g transform="translate(1408,672)"><rect x="-8" y="-2" width="16" height="4" rx="2" fill="#fff" stroke="#3e4d60" stroke-width="1.200"/><path d="M5-2h3v4h-3z" fill="#3e4d60"/></g>
<g transform="translate(1407,684)"><path d="M0 6V0M-3 0L0-3 3 0z" fill="#c22" stroke="#c22" stroke-width="1.500"/></g>
<g transform="translate(1408,727)" fill="none" stroke="#46566a" stroke-width="1.800"><rect x="-8" y="-8" width="16" height="16"/><path d="M0-8V8M-8 0H8"/></g>
<g transform="translate(1408,752)"><path d="M-6 5L4-7l3 3L-3 8z" fill="#5f7fc8"/><path d="M-2 3L6-5" stroke="#c23" stroke-width="1.200"/></g>

<!-- BOTTOM TOOLBAR -->
<use href="#gv" x="435" y="790"/><use href="#gv" x="656" y="790"/><use href="#gv" x="1153" y="790"/><use href="#gv" x="1308" y="790"/>
<g>
<g transform="translate(455,790)"><rect x="-9" y="-9" width="18" height="18" class="bx"/><rect x="-9" y="-9" width="18" height="3" fill="#46566a"/><path d="M-6-2H6" stroke="#b81c20"/><rect x="-2" y="-4" width="4" height="4" class="rs"/><text x="-4" y="7" font-size="6.500" font-weight="bold" fill="#b81c20">10</text></g>
<g transform="translate(479,790)"><rect x="-9" y="-9" width="18" height="18" class="bx"/><rect x="-9" y="-9" width="18" height="3" fill="#46566a"/><path d="M-5 5L0-4 5 5z" fill="none" stroke="#b81c20" stroke-width="1.600"/></g>
<g transform="translate(502,790)"><rect x="-9" y="-9" width="18" height="18" class="bx"/><rect x="-9" y="-9" width="18" height="3" fill="#46566a"/><circle cx="-3" cy="1" r="3" fill="#b81c20"/><rect x="3" y="-6" width="4" height="14" class="rs"/></g>
<g transform="translate(526,790)"><rect x="-9" y="-9" width="18" height="18" class="bx"/><rect x="-9" y="-9" width="18" height="3" fill="#46566a"/><rect x="-6" y="-5" width="3" height="10" fill="#f6d6d6" stroke="#b81c20" stroke-width=".8"/><circle cx="-4.500" cy="5" r="2.500" fill="#b81c20"/><circle cx="3" cy="1" r="4" class="rs"/></g>
<g transform="translate(550,790)"><rect x="-9" y="-9" width="18" height="18" class="bx"/><rect x="-9" y="-9" width="18" height="3" fill="#46566a"/><rect x="-6" y="-3" width="12" height="9" class="rs"/><path d="M-2-3v-2h4v2M-6 1H6" class="rs"/></g>
<g transform="translate(574,790)"><rect x="-9" y="-9" width="18" height="18" class="bx"/><rect x="-9" y="-9" width="18" height="3" fill="#46566a"/><text x="-4.500" y="7" font-size="12" font-weight="bold" style="font-family:'Liberation Serif',serif" fill="#b81c20">E</text></g>
<g transform="translate(597,790)"><rect x="-9" y="-9" width="18" height="18" class="bx"/><rect x="-9" y="-9" width="18" height="3" fill="#46566a"/><text x="-8" y="5" font-size="8" font-weight="bold" style="font-family:'Liberation Serif',serif" fill="#b81c20">Rho</text></g>
<g transform="translate(621,790)"><rect x="-9" y="-9" width="18" height="18" class="bx"/><rect x="-9" y="-9" width="18" height="3" fill="#46566a"/><path d="M-6 2q3-8 6-3t7 0M-6 7q3-4 6-2t7-1" class="rs"/></g>
<use href="#dn" x="638" y="795"/>
</g>
<path class="sep" d="M648 781v20M829 781v20M944 781v20M1017 781v20M1258 781v20M1147 781v20"/>
<g fill="none" stroke="#8a8a8a" stroke-width="1.300">
<path transform="translate(683,790)" d="M-2-8H8v7c0 5-3 8-8 8H-8V1h4c2 0 2-1 2-2zM-5 1V7"/>
<g transform="translate(714,790)"><path d="M-9-3h5v6h-5zM5-3h5v6H5zM-4-1h9M-3-1v6h6V-1M-3-1L0-7l3 6"/><rect x="-2" y="-8" width="4" height="2"/></g>
<g transform="translate(748,790)"><path d="M-9-7v14M9-7v14M-9 0h18M-5-7h10v14h-10zM0-8v16M-5-3l10 6M-5 3l10-6"/></g>
<g transform="translate(782,790)"><path d="M-8-7V7L8 3V-3zM-8-1h16M-4-6v12"/></g>
<path transform="translate(815,790)" d="M-9-7H9v5H3V8h-6V-2H-9z" stroke="#666"/>
<g transform="translate(845,790)"><path d="M-8 2L0-6 8 2z"/><path d="M-8 4h16M-7 7l2-3M-3 7l2-3M1 7l2-3"/></g>
<g transform="translate(870,790)" stroke="#666"><rect x="-9" y="-8" width="18" height="14" fill="#dfe1e4"/><path d="M-5-4h10M-5-1h10M-5 2h10M-1 6v3"/></g>
<g transform="translate(903,790)" stroke="#666"><path d="M-8-8v16M-8-3H7v6H-8"/></g>
<g transform="translate(930,790)"><path d="M-7 7L-1-7 6 7z" stroke-width="1.700"/></g>
<g transform="translate(957,790)" stroke="#666"><path d="M0-9v10M-4-3l4 4 4-4"/><rect x="-9" y="3" width="18" height="5" rx="2"/></g>
<g transform="translate(981,790)"><path d="M-9 9V2q4-4 8-1t9-1V9zM-7-7H6M3-10l3 3-3 3M6-3H-3M0-6l-3 3 3 3"/></g>
<g transform="translate(1005,790)" stroke="#666"><path d="M-7-7H7M-5-7V0M-2-7V0M2-7V0M5-7V0" stroke-width="1.600"/><rect x="-9" y="1" width="18" height="6" rx="2"/></g>
<g transform="translate(1035,790)" stroke="#666"><path d="M-8 9L8-9M-8 9h9L1 1M-4 9l9-15"/></g>
<g transform="translate(1057,790)" stroke="#666"><path d="M-7-7H-1M-7 7H-1M-4-7V7M-1-8H7M1-8a2 2 0 1 0 4 0"/><text x="0" y="4" font-size="7" fill="#777" stroke="none">a</text></g>
<g transform="translate(1080,790)" stroke="#666"><path d="M-7 0h3M-1 0h3M5 0h3"/><rect x="-4" y="-2" width="3" height="4"/><rect x="2" y="-2" width="3" height="4"/><path d="M-6-4H0"/></g>
<path transform="translate(1106,790)" d="M-3-8h3a4 8 0 0 1 0 16h-3"/>
</g>
<use href="#ua" x="695" y="791"/><use href="#ua" x="729" y="791"/><use href="#ua" x="764" y="791"/><use href="#ua" x="798" y="791"/><use href="#ua" x="886" y="791"/><use href="#ua" x="1121" y="791"/>
<use href="#dn" x="1132" y="795"/>
<g transform="translate(1172,790)"><path d="M-8 7q4-8 14-7" fill="none" stroke="#c0272b" stroke-width="1.300"/><path d="M-3 3L5-8" stroke="#3d4d60" stroke-width="3"/><path d="M3 0l6-2" stroke="#999" stroke-width="2"/></g>
<g transform="translate(1196,790)"><rect x="-8" y="1" width="8" height="8" class="rs"/><path d="M-3 3L5-8" stroke="#3d4d60" stroke-width="3"/><path d="M2 0l7-2" stroke="#999" stroke-width="2"/></g>
<g transform="translate(1220,790)"><circle cx="-4" cy="5" r="4" class="rs"/><path d="M-3 3L5-8" stroke="#3d4d60" stroke-width="3"/><path d="M2 0l7-2" stroke="#999" stroke-width="2"/></g>
<g transform="translate(1242,790)"><rect x="-5" y="-2" width="5" height="5" fill="#c62828"/><path d="M3-6h4M3 6h4M5-6V6" stroke="#333" stroke-width="1.300"/></g>
<g transform="translate(1272,790)"><rect x="-7" y="-7" width="12" height="12" fill="#dfe2e6" stroke="#666"/><rect x="-4" y="-4" width="5" height="5" fill="#f6d6d6" stroke="#c22"/><path d="M3 3l5 5" stroke="#444" stroke-width="2"/></g>
<use href="#dn" x="1290" y="795"/>
<g transform="translate(1332,790)"><path d="M-4 9V-5M-4 2L5-7M-4 5L7 5" stroke="#c22" stroke-width="1.700" fill="none"/><path d="M-6-8h4v14h-4z" fill="none" stroke="#5f6d7e"/></g>
<g transform="translate(1356,790)" fill="none" stroke="#8a8a8a" stroke-width="1.300"><path d="M-9 4V-5H6V1M-9 1H5M3 7l4-3"/></g>
<g transform="translate(1381,790)" fill="none" stroke="#5a5a5a" stroke-width="1.300"><path d="M-6-9V8H8V-3H-2V8M-9-6l3-3 3 3"/></g>
<g transform="translate(1404,790)" fill="none" stroke="#8a8a8a" stroke-width="1.300"><rect x="-9" y="-5" width="13" height="13"/><path d="M-9 8L9-10M5-10h4v4"/></g>
<use href="#dn" x="1420" y="795"/>
</svg>
</body></html>
